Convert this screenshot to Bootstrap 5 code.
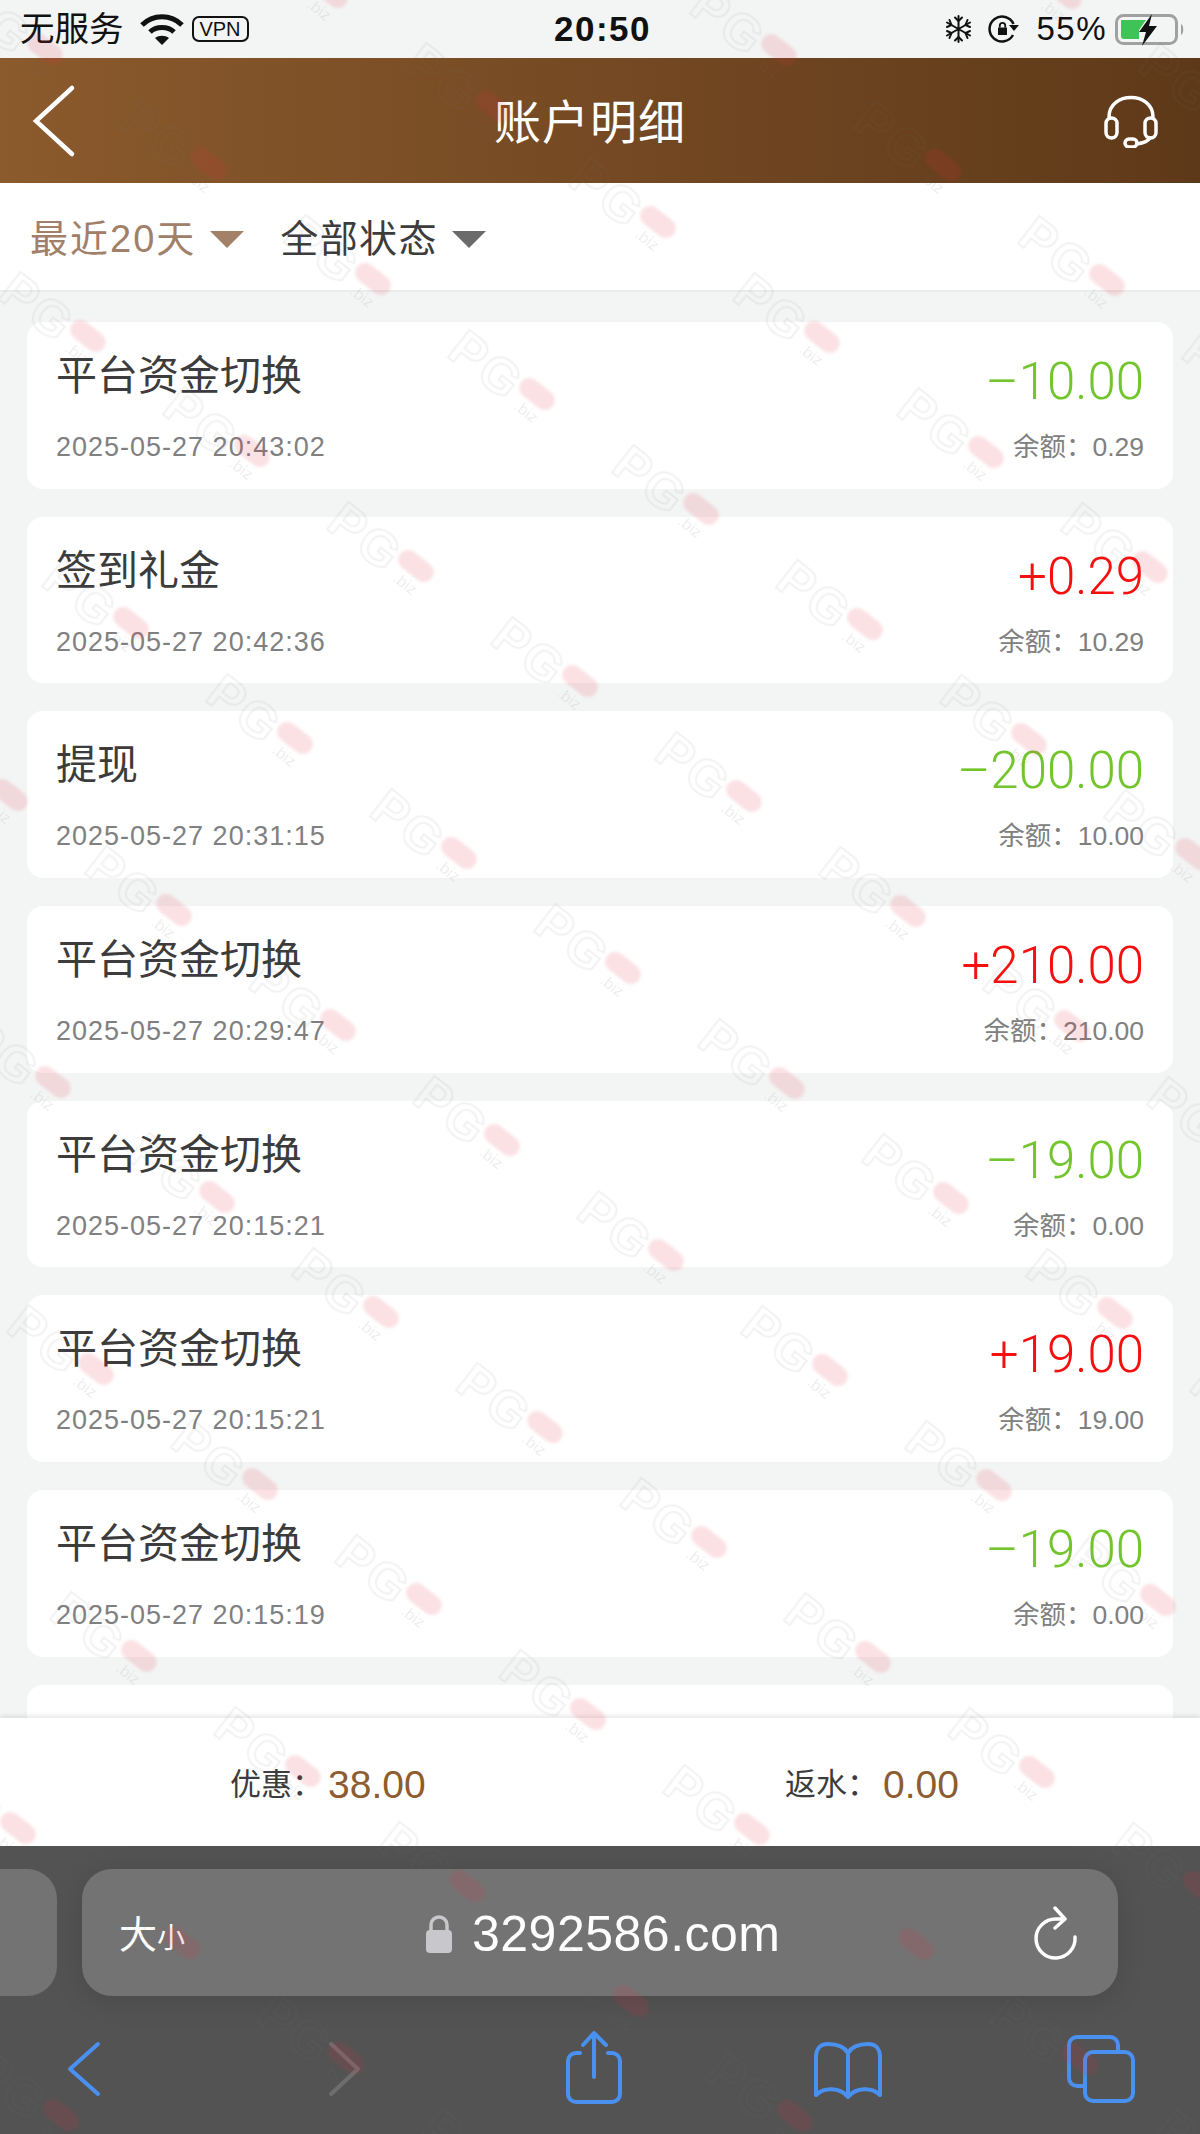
<!DOCTYPE html>
<html lang="zh-CN">
<head>
  <meta charset="UTF-8" />
  <title>账户明细</title>
  <meta name="viewport" content="width=device-width, initial-scale=1" />
  <link href="https://cdn.jsdelivr.net/npm/bootstrap@5.3.0/dist/css/bootstrap.min.css" rel="stylesheet" />
  <style>
    body {
      margin: 0;
      width: 1200px;
      height: 2134px;
      overflow: hidden;
      position: relative;
      background: #f3f5f5;
      font-family: "Liberation Sans", "Noto Sans CJK SC", sans-serif;
    }

    /* status bar */
    .status-bar { height: 58px; padding: 0 15px 0 20px; color: #111; background: #f3f5f5; }
    .status-side { flex: 1 1 0; }
    .status-text { font-size: 34.5px; line-height: 58px; }
    .status-time { font-size: 35px; font-weight: 700; line-height: 60px; letter-spacing: 1.5px; }
    .status-pct { font-size: 33px; letter-spacing: 1.5px; line-height: 58px; }
    .vpn-tag {
      width: 57px;
      height: 26px;
      border: 2px solid #111;
      border-radius: 7px;
      font-size: 20px;
      line-height: 22px;
      text-align: center;
    }

    /* title bar */
    .title-bar { height: 125px; background: linear-gradient(90deg, #8b5a2d, #5e3919); color: #fff; }
    .title-side { width: 100px; flex: none; }
    .title-text { font-size: 47px; letter-spacing: 1px; padding: 6px 20px 0 0; }
    .headset { margin-right: 42px; }

    /* filters */
    .filter-bar { height: 109px; padding: 6px 30px 0; gap: 36px; background: #fff; border-bottom: 2px solid #e9ecec; }
    .filter-item { font-size: 38px; letter-spacing: 1.4px; color: #3c3c3c; gap: 14px; }
    .filter-item.on { color: #a08068; letter-spacing: 2px; }
    .filter-arrow { width: 0; height: 0; border-left: 17px solid transparent; border-right: 17px solid transparent; border-top: 17px solid #6b6b6b; }
    .filter-item.on .filter-arrow { border-top-color: #a38068; }

    /* records */
    .rec-list { height: 1426px; overflow: hidden; padding: 30px 27px 0; gap: 28px; background: #f3f5f5; }
    .rec-card { height: 166.7px; flex: none; border-radius: 16px; padding: 24px 29px 0 29px; }
    .rec-title { font-size: 41px; line-height: 60px; color: #3c3c3c; }
    .rec-amount { font-family: Roboto, "Liberation Sans", sans-serif; font-weight: 300; font-size: 51px; line-height: 60px; margin-top: 6px; }
    .rec-amount.up { color: #f50f0f; }
    .rec-amount.down { color: #73c52c; }
    .rec-row2 { margin-top: 15px; line-height: 40px; color: #808080; }
    .rec-date { font-size: 27px; letter-spacing: 1px; }
    .rec-balance { font-size: 26.5px; }

    /* summary */
    .sum-bar { height: 128px; padding: 6px 0 0 230px; gap: 360px; background: #fff; box-shadow: 0 -2px 5px rgba(0,0,0,.1); position: relative; }
    .sum-item { width: 195px; flex: none; white-space: nowrap; }
    .sum-label { font-size: 31px; color: #3c3c3c; }
    .sum-value { font-size: 39px; color: #8e5c30; margin-left: 5px; }

    /* safari chrome */
    .safari { height: 288px; background: #535353; padding-top: 23px; position: relative; }
    .url-row { gap: 25px; margin-left: -100px; height: 127px; }
    .tab-stub { width: 157px; flex: none; border-radius: 30px; background: #737373; }
    .url-box { width: 1036px; flex: none; border-radius: 30px; background: #737373; color: #fff; padding: 3px 40px 0 37px; box-shadow: 0 4px 30px rgba(0,0,0,.12); }
    .url-size { width: 306px; flex: none; font-size: 38px; padding-top: 3px; }
    .url-size small { font-size: 28px; }
    .url-host { font-size: 50px; letter-spacing: .5px; margin-left: 19px; }
    .tool-row { padding-left: 44px; gap: 174px; margin-top: 33px; }
    .tool-icon { width: 80px; height: 80px; flex: none; fill: none; stroke: #4a90f0; stroke-width: 4; stroke-linecap: round; stroke-linejoin: round; }
    .tool-icon.off { stroke: #6e6e6e; }

    /* watermark */
    #wmLayer { position: absolute; left: 0; top: 0; pointer-events: none; }
    .wm-pg { font-family: "Liberation Sans", sans-serif; font-weight: 700; font-size: 50px; letter-spacing: 3px; fill: none; stroke: rgba(110,110,110,.09); stroke-width: 2; filter: blur(.6px); }
    .wm-biz { font-family: "Liberation Sans", sans-serif; font-size: 16px; fill: rgba(110,110,110,.12); }
    .wm-pill { fill: rgba(225,45,65,.14); filter: blur(1.5px); }
  </style>
</head>
<body>

  <!-- status bar -->
  <div class="status-bar d-flex align-items-center">
    <div class="status-side d-flex align-items-center">
      <span class="status-text">无服务</span>
      <svg class="ms-3" width="44" height="31" viewBox="0 0 44 31" fill="none" stroke="#111" stroke-width="5">
        <path d="M2 11 C13 0 31 0 42 11" />
        <path d="M10 18 C16 12 28 12 34 18" />
        <path d="M22 31 L15 24 C19 21 25 21 29 24 Z" fill="#111" stroke="none" />
      </svg>
      <div class="vpn-tag ms-2">VPN</div>
    </div>
    <div class="status-time">20:50</div>
    <div class="status-side d-flex align-items-center justify-content-end">
      <svg width="27" height="28" viewBox="0 0 27 28" fill="none" stroke="#111" stroke-width="2" stroke-linecap="round">
        <path d="M13.5 1 V27 M2 7.5 L25 20.5 M25 7.5 L2 20.5" />
        <path d="M10 2.5 L13.5 6 L17 2.5 M10 25.5 L13.5 22 L17 25.5 M2 12 L6.5 10 L4.5 5 M25 16 L20.5 18 L22.5 23 M2 16 L6.5 18 L4.5 23 M25 12 L20.5 10 L22.5 5" />
      </svg>
      <svg class="ms-3 me-3" width="32" height="28" viewBox="0 0 32 28" fill="none" stroke="#111" stroke-width="2.5">
        <path d="M25 20 A12.5 12.5 0 1 1 25.5 9" />
        <path d="M31 10 H21 L26 16 Z" fill="#111" stroke="none" />
        <path d="M10 12.5 H19 V20 H10 Z" fill="#111" stroke="none" />
        <path d="M11.8 12.5 V10.5 A2.7 2.7 0 0 1 17.2 10.5 V12.5" stroke-width="1.8" />
      </svg>
      <span class="status-pct">55%</span>
      <svg class="ms-2" width="70" height="33" viewBox="0 0 70 33" fill="none">
        <rect x="1.5" y="2.5" width="60" height="28" rx="7" stroke="#a0a0a0" stroke-width="3" />
        <path d="M66 11 C69 12 69 21 66 22 Z" fill="#a0a0a0" />
        <path d="M6 7 H31 L24 17 V26 H9 A3 3 0 0 1 6 23 Z" fill="#3ec456" />
        <path d="M37 1 L24 19 H31 L27 33 L42 13 H34 Z" fill="#111" />
      </svg>
    </div>
  </div>

  <!-- title bar -->
  <div class="title-bar d-flex align-items-center">
    <div class="title-side ps-4">
      <svg class="d-block ms-1" width="50" height="80" viewBox="0 0 50 80" fill="none" stroke="#fff" stroke-width="4.5" stroke-linecap="round">
        <path d="M44 7 L8 40 L44 73" />
      </svg>
    </div>
    <div class="title-text flex-fill text-center">账户明细</div>
    <div class="title-side d-flex justify-content-end">
      <svg class="headset" width="54" height="54" viewBox="0 0 54 54" fill="none" stroke="#fff" stroke-width="3.5" stroke-linecap="round">
        <path d="M5 23 C5 -3 49 -3 49 23" />
        <rect x="2" y="24" width="11" height="20" rx="5.5" />
        <rect x="41" y="24" width="11" height="20" rx="5.5" />
        <path d="M46 44 C44 47 39 49 33 50" />
        <rect x="21" y="45" width="12" height="8" rx="4" />
      </svg>
    </div>
  </div>

  <!-- filters -->
  <div class="filter-bar d-flex align-items-center">
    <div class="filter-item on d-flex align-items-center"><span>最近20天</span><span class="filter-arrow"></span></div>
    <div class="filter-item d-flex align-items-center"><span>全部状态</span><span class="filter-arrow"></span></div>
  </div>

  <!-- records -->
  <div id="recList" class="rec-list d-flex flex-column"></div>

  <!-- summary -->
  <div class="sum-bar d-flex align-items-center">
    <div class="sum-item d-flex align-items-center"><span class="sum-label">优惠：</span><span class="sum-value">38.00</span></div>
    <div class="sum-item d-flex align-items-center"><span class="sum-label">返水：</span><span class="sum-value">0.00</span></div>
  </div>

  <!-- browser bar -->
  <div class="safari">
    <div class="url-row d-flex">
      <div class="tab-stub"></div>
      <div class="url-box d-flex align-items-center">
        <div class="url-size">大<small>小</small></div>
        <svg width="28" height="38" viewBox="0 0 28 38" fill="none">
          <path d="M6 17 V10 A8 8 0 0 1 22 10 V17" stroke="#c8c8cc" stroke-width="3.5" />
          <rect x="1" y="15" width="26" height="23" rx="4" fill="#c8c8cc" />
        </svg>
        <div class="url-host flex-fill">3292586.com</div>
        <svg width="44" height="56" viewBox="0 0 44 56" fill="none" stroke="#fff" stroke-width="3.5" stroke-linecap="round" stroke-linejoin="round">
          <path d="M41 31 A19.5 19.5 0 1 1 22 13 H30" />
          <path d="M21 2 L31 13 L21 22" />
        </svg>
      </div>
    </div>
    <div class="tool-row d-flex">
      <svg class="tool-icon" viewBox="0 0 80 80"><path d="M54 15 L26 40 L54 65" /></svg>
      <svg class="tool-icon off" viewBox="0 0 80 80"><path d="M33 15 L60 40 L33 65" /></svg>
      <svg class="tool-icon" viewBox="0 0 80 80">
        <path d="M28 24 H24 A8 8 0 0 0 16 32 V65 A8 8 0 0 0 24 73 H60 A8 8 0 0 0 68 65 V32 A8 8 0 0 0 60 24 H56" />
        <path d="M42 48 V4 M31 16 L42 4 L54 16" />
      </svg>
      <svg class="tool-icon" viewBox="0 0 80 80">
        <path d="M42 24 C38 17 29 15 22 15 C14 15 10 20 10 28 V66 C18 58 34 58 42 68 C50 58 66 58 74 66 V28 C74 20 70 15 62 15 C55 15 46 17 42 24 V66" />
      </svg>
      <svg class="tool-icon" viewBox="0 0 80 80">
        <path d="M25 57 H17 A8 8 0 0 1 9 49 V16 A8 8 0 0 1 17 8 H50 A8 8 0 0 1 58 16 V23" />
        <rect x="25" y="23" width="48" height="49" rx="8" />
      </svg>
    </div>
  </div>

  <!-- watermark layer -->
  <svg id="wmLayer" width="1200" height="2134" viewBox="0 0 1200 2134"></svg>

  <script src="https://cdn.jsdelivr.net/npm/bootstrap@5.3.0/dist/js/bootstrap.bundle.min.js"></script>
  <script>
    const records = [
      { title: "平台资金切换", amount: "–10.00", dir: "down", time: "2025-05-27 20:43:02", balance: "0.29" },
      { title: "签到礼金", amount: "+0.29", dir: "up", time: "2025-05-27 20:42:36", balance: "10.29" },
      { title: "提现", amount: "–200.00", dir: "down", time: "2025-05-27 20:31:15", balance: "10.00" },
      { title: "平台资金切换", amount: "+210.00", dir: "up", time: "2025-05-27 20:29:47", balance: "210.00" },
      { title: "平台资金切换", amount: "–19.00", dir: "down", time: "2025-05-27 20:15:21", balance: "0.00" },
      { title: "平台资金切换", amount: "+19.00", dir: "up", time: "2025-05-27 20:15:21", balance: "19.00" },
      { title: "平台资金切换", amount: "–19.00", dir: "down", time: "2025-05-27 20:15:19", balance: "0.00" }
    ];

    const list = document.getElementById("recList");
    records.forEach(r => {
      const div = document.createElement("div");
      div.className = "card border-0 rec-card";
      div.innerHTML = `
        <div class="d-flex justify-content-between align-items-start">
          <div class="rec-title">${r.title}</div>
          <div class="rec-amount ${r.dir}">${r.amount}</div>
        </div>
        <div class="rec-row2 d-flex justify-content-between">
          <div class="rec-date">${r.time}</div>
          <div class="rec-balance">余额：${r.balance}</div>
        </div>
      `;
      list.appendChild(div);
    });
    // last card is cut off by the summary bar
    const cutCard = document.createElement("div");
    cutCard.className = "card border-0 rec-card";
    list.appendChild(cutCard);

    // repeated site watermark, lattice measured off the picture
    let marks = "";
    for (let i = -20; i <= 20; i++) {
      for (let j = -20; j <= 20; j++) {
        const x = 88 + 164 * i - 121 * j;
        const y = 336 + 115 * i + 172 * j;
        if (x < -60 || x > 1300 || y < -60 || y > 2220) continue;
        marks += `<g transform="translate(${x} ${y}) rotate(38)">
          <text class="wm-pg" x="-96" y="26">PG</text>
          <text class="wm-biz" x="-10" y="26">.biz</text>
          <rect class="wm-pill" x="-20" y="-10" width="40" height="20" rx="10" />
        </g>`;
      }
    }
    document.getElementById("wmLayer").innerHTML = marks;
  </script>
</body>
</html>
